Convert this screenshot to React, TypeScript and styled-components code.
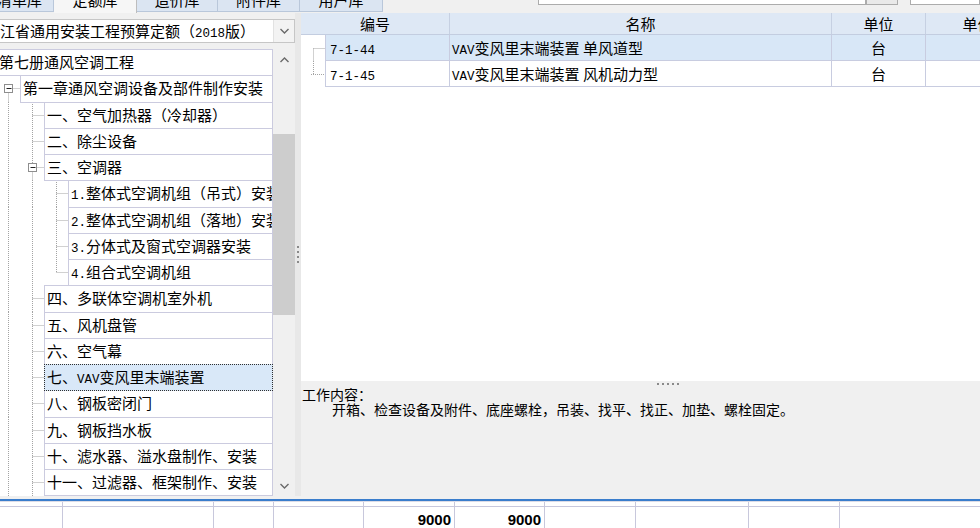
import React from 'react';
import styled, { createGlobalStyle } from 'styled-components';

const CJK = `"Noto Sans CJK SC", "Noto Sans", sans-serif`;
const MONO = `"Liberation Mono", "DejaVu Sans Mono", monospace`;

const GlobalStyle = createGlobalStyle`
  html, body { margin: 0; padding: 0; background: #f0f0f0; }
  body { font-family: ${CJK}; color: #000; }
`;

const Page = styled.div`
  width: 980px;
  height: 528px;
  overflow: hidden;
  display: flex;
  flex-direction: column;
  background: #f0f0f0;
`;

/* ---------- top strip ---------- */

const TopBar = styled.div`
  flex: none;
  height: 13px;
  display: flex;
  align-items: flex-start;
`;

const Tabs = styled.div`
  display: flex;
  align-items: flex-start;
  margin-left: -14px;
`;

const Tab = styled.div<{ $w: number; $active?: boolean }>`
  width: ${p => p.$w}px;
  height: ${p => (p.$active ? 13 : 12)}px;
  box-sizing: border-box;
  flex: none;
  overflow: hidden;
  display: flex;
  justify-content: center;
  background: ${p => (p.$active ? '#f6f6f6' : '#dbe5f2')};
  border-right: 1px solid ${p => (p.$active ? '#bdbdbd' : '#b9c7da')};
  border-bottom: ${p => (p.$active ? 'none' : '1px solid #b9c7da')};
  font-size: 15px;
  line-height: 15px;
`;

const TabLabel = styled.span`
  margin-top: -8px;
  white-space: nowrap;
`;

const TopTools = styled.div`
  margin-left: auto;
  display: flex;
  align-items: flex-start;
`;

const EdgeBox = styled.div<{ $w: number; $gap?: number; $gray?: boolean }>`
  width: ${p => p.$w}px;
  margin-left: ${p => p.$gap || 0}px;
  height: 5px;
  box-sizing: border-box;
  background: ${p => (p.$gray ? '#e9e9e9' : '#fff')};
  border: 1px solid #acacac;
  border-top: none;
`;

/* ---------- main area ---------- */

const Main = styled.div`
  flex: none;
  height: 483px;
  display: flex;
`;

const LeftPanel = styled.div`
  width: 295px;
  flex: none;
  box-sizing: border-box;
  padding-top: 6px;
  display: flex;
  flex-direction: column;
  gap: 6px;
`;

const Combo = styled.div`
  height: 24px;
  flex: none;
  box-sizing: border-box;
  display: flex;
  background: #fff;
  border: 1px solid #c6c6c6;
  border-left: none;
`;

const ComboText = styled.div`
  flex: 1;
  min-width: 0;
  overflow: hidden;
  white-space: nowrap;
  font-size: 15px;
  line-height: 22px;
  text-indent: -15px;
`;

const DropButton = styled.div`
  width: 20px;
  flex: none;
  display: flex;
  align-items: center;
  justify-content: center;
  background: #f3f3f3;
  border-left: 1px solid #e2e2e2;
`;

const TreeBox = styled.div`
  flex: 1;
  min-height: 0;
  display: flex;
  background: #fff;
`;

const TreeList = styled.div`
  flex: 1;
  min-width: 0;
  margin-left: -4px;
  overflow: hidden;
  display: flex;
  flex-direction: column;
`;

const TreeRow = styled.div`
  flex: none;
  height: 26.25px;
  display: flex;
`;

const GutterSvg = styled.svg`
  flex: none;
  display: block;
  overflow: visible;
`;

const ItemBox = styled.div<{ $selected?: boolean }>`
  flex: 1;
  min-width: 0;
  height: calc(100% + 1px);
  box-sizing: border-box;
  position: relative;
  z-index: ${p => (p.$selected ? 1 : 0)};
  border: 1px ${p => (p.$selected ? 'dotted #303030' : 'solid #cbcbdf')};
  background: ${p => (p.$selected ? '#d9e8f8' : '#fff')};
  padding-left: 2px;
  font-size: 15px;
  line-height: 24px;
  white-space: nowrap;
  overflow: hidden;
`;

const Latin = styled.span`
  font-family: ${MONO};
  font-size: 12.5px;
`;

const ScrollBar = styled.div`
  width: 22px;
  flex: none;
  display: flex;
  flex-direction: column;
  background: #f0f0f0;
`;

const ScrollButton = styled.div`
  height: 21px;
  flex: none;
  display: flex;
  align-items: center;
  justify-content: center;
`;

const Track = styled.div`
  flex: 1;
  display: flex;
  flex-direction: column;
`;

const Thumb = styled.div`
  margin-top: 64px;
  height: 181px;
  background: #cdcdcd;
`;

const VSplitter = styled.div`
  width: 6px;
  flex: none;
  display: flex;
  align-items: center;
  justify-content: center;
  background: #e8e8e8;
`;

const VGrip = styled.div`
  width: 2px;
  height: 18px;
  background: repeating-linear-gradient(to bottom, #8a8a8a 0 2px, transparent 2px 5px);
`;

const RightPanel = styled.div`
  flex: 1;
  min-width: 0;
  display: flex;
  flex-direction: column;
`;

const TablePane = styled.div`
  flex: none;
  height: 368px;
  background: #fff;
  overflow: hidden;
`;

const HeadRow = styled.div`
  height: 22px;
  display: flex;
  box-sizing: border-box;
  background: #dee8f5;
  border-bottom: 1px solid #c3cde0;
`;

const HeadCell = styled.div<{ $w: number }>`
  width: ${p => p.$w}px;
  flex: none;
  box-sizing: border-box;
  border-right: 1px solid #c6d0e2;
  text-align: center;
  font-size: 15px;
  line-height: 21px;
  white-space: nowrap;
`;

const DataRow = styled.div`
  height: 26px;
  display: flex;
`;

const RowGutter = styled.div`
  width: 24px;
  flex: none;
  background: #fff;
`;

const DataCell = styled.div<{ $w: number; $selected?: boolean; $center?: boolean; $first?: boolean }>`
  width: ${p => p.$w}px;
  flex: none;
  box-sizing: border-box;
  background: ${p => (p.$selected ? '#d8e7f7' : '#fff')};
  border-right: 1px solid #c8cce0;
  border-bottom: 1px solid #c8cce0;
  border-left: ${p => (p.$first ? '1px solid #c8cce0' : 'none')};
  padding: 0 ${p => (p.$first ? 4 : 2)}px;
  text-align: ${p => (p.$center ? 'center' : 'left')};
  font-size: 15px;
  line-height: 25px;
  white-space: nowrap;
  overflow: hidden;
`;

const HSplitter = styled.div`
  flex: none;
  height: 5px;
  display: flex;
  align-items: center;
  background: #f0f0f0;
`;

const HGrip = styled.div`
  margin-left: 356px;
  width: 23px;
  height: 2px;
  background: repeating-linear-gradient(to right, #8a8a8a 0 2px, transparent 2px 5px);
`;

const InfoPane = styled.div`
  flex: 1;
  background: #f0f0f0;
  padding: 1px 0 0 1px;
  font-size: 14px;
  line-height: 15px;
`;

const InfoLine = styled.div<{ $indent?: number }>`
  padding-left: ${p => p.$indent || 0}px;
  white-space: nowrap;
`;

/* ---------- bottom grid ---------- */

const Bottom = styled.div`
  flex: none;
  height: 32px;
  display: flex;
  flex-direction: column;
  padding-top: 3px;
  box-sizing: border-box;
`;

const BlueRule = styled.div`
  height: 2px;
  flex: none;
  background: #3a7dcc;
`;

const FootRow = styled.div<{ $strip?: boolean }>`
  flex: none;
  height: ${p => (p.$strip ? 6 : 26)}px;
  display: flex;
  background: #fff;
  box-sizing: border-box;
  border-top: ${p => (p.$strip ? '1px solid #dcdce6' : 'none')};
  border-bottom: ${p => (p.$strip ? '1px solid #c8c8dc' : 'none')};
`;

const FootCell = styled.div<{ $w: number }>`
  width: ${p => p.$w}px;
  flex: none;
  box-sizing: border-box;
  border-right: 1px solid #c8c8dc;
  padding-right: 3px;
  text-align: right;
  font-family: "Liberation Sans", Arial, sans-serif;
  font-weight: bold;
  font-size: 15px;
  line-height: 26px;
`;

/* ---------- pieces ---------- */

const Mixed = ({ text }: { text: string }) => (
  <>
    {text.split(/([A-Za-z0-9.\-]+)/).map((s, i) => (i % 2 ? <Latin key={i}>{s}</Latin> : s))}
  </>
);

const Chevron = ({ up }: { up?: boolean }) => (
  <svg width="9" height="6" viewBox="0 0 9 6">
    <polyline
      points={up ? '0.5,5 4.5,1 8.5,5' : '0.5,1 4.5,5 8.5,1'}
      fill="none"
      stroke="#6a6a6a"
      strokeWidth="1.4"
    />
  </svg>
);

type Guide = 'line' | 'tee' | 'elbow' | 'open' | 'openMid';

const ROW_H = 26.25;
const CY = 13.5;
const dots = { stroke: '#a3a3a3', strokeWidth: 1, strokeDasharray: '1 1' };

const Guides = ({ guides }: { guides: Guide[] }) => {
  if (!guides.length) return null;
  return (
    <GutterSvg width={guides.length * 24} height={ROW_H}>
      {guides.map((g, k) => {
        const cx = k * 24 + 12.5;
        const right = (k + 1) * 24;
        const toggle = g === 'open' || g === 'openMid';
        return (
          <g key={k}>
            {(g === 'line' || g === 'tee') && <line x1={cx} y1={0} x2={cx} y2={ROW_H + 1} {...dots} />}
            {g === 'elbow' && <line x1={cx} y1={0} x2={cx} y2={CY} {...dots} />}
            {(g === 'tee' || g === 'elbow') && <line x1={cx} y1={CY} x2={right} y2={CY} {...dots} />}
            {g === 'openMid' && <line x1={cx} y1={0} x2={cx} y2={CY - 4} {...dots} />}
            {toggle && (
              <>
                <line x1={cx} y1={CY + 4} x2={cx} y2={ROW_H + 1} {...dots} />
                <line x1={cx + 4} y1={CY} x2={right} y2={CY} {...dots} />
                <rect x={cx - 4} y={CY - 4} width={8} height={8} fill="#fff" stroke="#8e8e8e" />
                <line x1={cx - 2} y1={CY} x2={cx + 3} y2={CY} stroke="#222" />
              </>
            )}
          </g>
        );
      })}
    </GutterSvg>
  );
};

const tabs = [
  { label: '清单库', w: 68 },
  { label: '定额库', w: 83, active: true },
  { label: '造价库', w: 81 },
  { label: '附件库', w: 82 },
  { label: '用户库', w: 83 },
];

const treeRows: { label: string; guides: Guide[]; selected?: boolean }[] = [
  { label: '第七册通风空调工程', guides: [] },
  { label: '第一章通风空调设备及部件制作安装', guides: ['open'] },
  { label: '一、空气加热器（冷却器）', guides: ['line', 'tee'] },
  { label: '二、除尘设备', guides: ['line', 'tee'] },
  { label: '三、空调器', guides: ['line', 'openMid'] },
  { label: '1.整体式空调机组（吊式）安装', guides: ['line', 'line', 'tee'] },
  { label: '2.整体式空调机组（落地）安装', guides: ['line', 'line', 'tee'] },
  { label: '3.分体式及窗式空调器安装', guides: ['line', 'line', 'tee'] },
  { label: '4.组合式空调机组', guides: ['line', 'line', 'elbow'] },
  { label: '四、多联体空调机室外机', guides: ['line', 'tee'] },
  { label: '五、风机盘管', guides: ['line', 'tee'] },
  { label: '六、空气幕', guides: ['line', 'tee'] },
  { label: '七、VAV变风里末端装置', guides: ['line', 'tee'], selected: true },
  { label: '八、钢板密闭门', guides: ['line', 'tee'] },
  { label: '九、钢板挡水板', guides: ['line', 'tee'] },
  { label: '十、滤水器、溢水盘制作、安装', guides: ['line', 'tee'] },
  { label: '十一、过滤器、框架制作、安装', guides: ['line', 'tee'] },
];

const items = [
  { code: '7-1-44', name: 'VAV变风里末端装置 单风道型', unit: '台', selected: true },
  { code: '7-1-45', name: 'VAV变风里末端装置 风机动力型', unit: '台' },
];

const footWidths = [63, 151, 60, 90, 91, 90, 91, 113, 91, 160];
const footValues: Record<number, string> = { 4: '9000', 5: '9000' };

export default function App() {
  return (
    <>
      <GlobalStyle />
      <Page>
        <TopBar>
          <Tabs>
            {tabs.map(t => (
              <Tab key={t.label} $w={t.w} $active={t.active}>
                <TabLabel>{t.label}</TabLabel>
              </Tab>
            ))}
          </Tabs>
          <TopTools>
            <EdgeBox $w={328} />
            <EdgeBox $w={32} $gray />
            <EdgeBox $w={70} $gap={12} />
          </TopTools>
        </TopBar>

        <Main>
          <LeftPanel>
            <Combo>
              <ComboText>
                <Mixed text="浙江省通用安装工程预算定额（2018版）" />
              </ComboText>
              <DropButton>
                <Chevron />
              </DropButton>
            </Combo>
            <TreeBox>
              <TreeList>
                {treeRows.map(r => (
                  <TreeRow key={r.label}>
                    <Guides guides={r.guides} />
                    <ItemBox $selected={r.selected}>
                      <Mixed text={r.label} />
                    </ItemBox>
                  </TreeRow>
                ))}
              </TreeList>
              <ScrollBar>
                <ScrollButton>
                  <Chevron up />
                </ScrollButton>
                <Track>
                  <Thumb />
                </Track>
                <ScrollButton>
                  <Chevron />
                </ScrollButton>
              </ScrollBar>
            </TreeBox>
          </LeftPanel>

          <VSplitter>
            <VGrip />
          </VSplitter>

          <RightPanel>
            <TablePane>
              <HeadRow>
                <HeadCell $w={149}>编号</HeadCell>
                <HeadCell $w={382}>名称</HeadCell>
                <HeadCell $w={94}>单位</HeadCell>
                <HeadCell $w={104}>单价</HeadCell>
              </HeadRow>
              {items.map((it, i) => (
                <DataRow key={it.code}>
                  <RowGutter>
                    <svg width="24" height="26">
                      {i === 0 ? (
                        <>
                          <line x1={12.5} y1={13.5} x2={24} y2={13.5} {...dots} />
                          <line x1={12.5} y1={13.5} x2={12.5} y2={26} {...dots} />
                        </>
                      ) : (
                        <>
                          <line x1={12.5} y1={0} x2={12.5} y2={13.5} {...dots} />
                          <line x1={10} y1={13.5} x2={24} y2={13.5} {...dots} />
                        </>
                      )}
                    </svg>
                  </RowGutter>
                  <DataCell $w={125} $first $selected={it.selected}>
                    <Mixed text={it.code} />
                  </DataCell>
                  <DataCell $w={382} $selected={it.selected}>
                    <Mixed text={it.name} />
                  </DataCell>
                  <DataCell $w={94} $center $selected={it.selected}>
                    {it.unit}
                  </DataCell>
                  <DataCell $w={104} $selected={it.selected} />
                </DataRow>
              ))}
            </TablePane>
            <HSplitter>
              <HGrip />
            </HSplitter>
            <InfoPane>
              <InfoLine>工作内容：</InfoLine>
              <InfoLine $indent={30}>开箱、检查设备及附件、底座螺栓，吊装、找平、找正、加垫、螺栓固定。</InfoLine>
            </InfoPane>
          </RightPanel>
        </Main>

        <Bottom>
          <BlueRule />
          <FootRow $strip>
            {footWidths.map((w, i) => (
              <FootCell key={i} $w={w} />
            ))}
          </FootRow>
          <FootRow>
            {footWidths.map((w, i) => (
              <FootCell key={i} $w={w}>
                {footValues[i] || ''}
              </FootCell>
            ))}
          </FootRow>
        </Bottom>
      </Page>
    </>
  );
}
